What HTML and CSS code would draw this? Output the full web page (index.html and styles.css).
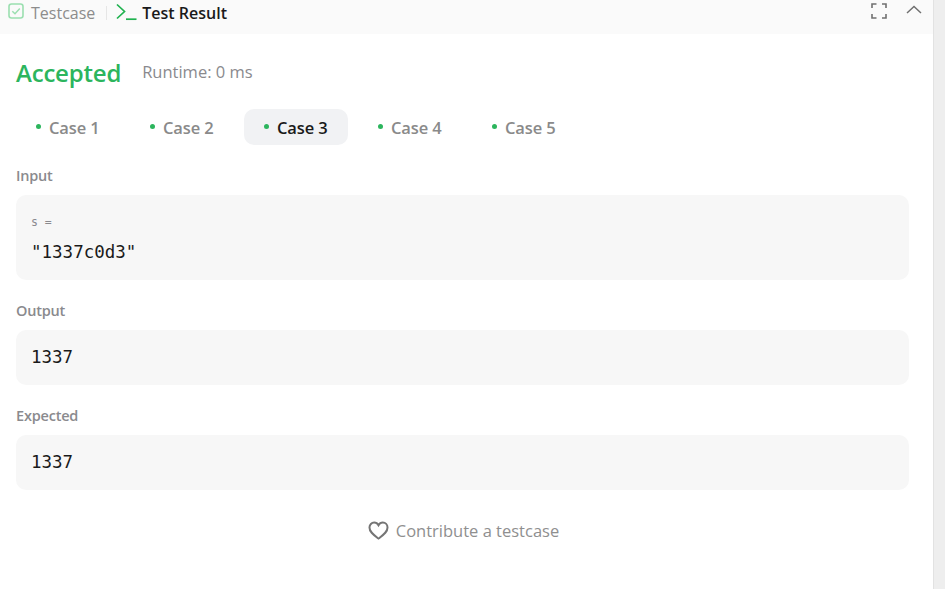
FILE: index.html
```html
<!DOCTYPE html>
<html lang="en">
<head>
    <meta charset="UTF-8">
    <meta name="viewport" content="width=device-width, initial-scale=1.0">
    <title>Test Result</title>
    <link rel="stylesheet" href="styles.css">
</head>
<body>

<div class="panel">
    <!-- Header tabs -->
    <div class="header">
        <div class="header-tab">
            <svg class="icon-check" width="16" height="16" viewBox="0 0 16 16" fill="none">
                <rect x="1" y="1" width="14" height="14" rx="2.5" stroke="#9bdfb0" stroke-width="1.6"/>
                <path d="M4.3 8.200l2.700 2.600 4.800-5.200" stroke="#9bdfb0" stroke-width="1.5"/>
            </svg>
            <span>Testcase</span>
        </div>
        <div class="divider"></div>
        <div class="header-tab active">
            <svg class="icon-term" width="21" height="18" viewBox="0 0 21 18" fill="none">
                <path d="M1 1.500l7.500 7-7.500 7" stroke="#1fb24f" stroke-width="1.700"/>
                <path d="M10 16.200h10.500" stroke="#1fb24f" stroke-width="1.700"/>
            </svg>
            <span>Test Result</span>
        </div>
        <div class="header-actions">
            <svg width="16" height="16" viewBox="0 0 16 16" fill="none">
                <path d="M1 5V1h4.500M11 1h4v4M15 11v4h-4M5.500 15H1v-4" stroke="#707070" stroke-width="1.600"/>
            </svg>
            <svg class="icon-chevron" width="16" height="9" viewBox="0 0 16 9" fill="none">
                <path d="M1 8l7-6.500L15 8" stroke="#707070" stroke-width="1.500"/>
            </svg>
        </div>
    </div>

    <!-- Result -->
    <div class="content">
        <div class="status">
            <span class="accepted">Accepted</span>
            <span class="runtime">Runtime: 0 ms</span>
        </div>

        <div class="cases">
            <div class="case"><i></i>Case 1</div>
            <div class="case"><i></i>Case 2</div>
            <div class="case active"><i></i>Case 3</div>
            <div class="case"><i></i>Case 4</div>
            <div class="case"><i></i>Case 5</div>
        </div>

        <div class="label first">Input</div>
        <div class="box">
            <div class="var-name">s =</div>
            <div class="value">"1337c0d3"</div>
        </div>

        <div class="label">Output</div>
        <div class="box"><div class="value">1337</div></div>

        <div class="label">Expected</div>
        <div class="box"><div class="value">1337</div></div>

        <div class="contribute">
            <svg width="21" height="19" viewBox="0 0 22 20" fill="none">
                <path d="M11 18.500C6 14.500 1.500 11.500 1.500 6.800 1.500 3.800 3.800 1.700 6.400 1.700c1.900 0 3.600 1 4.600 2.800 1-1.800 2.700-2.800 4.600-2.800 2.600 0 4.900 2.100 4.900 5.100 0 4.700-4.500 7.700-9.500 11.700z" stroke="#757575" stroke-width="2.100"/>
            </svg>
            <span>Contribute a testcase</span>
        </div>
    </div>
</div>

<div class="scrollbar"></div>

</body>
</html>
```
FILE: styles.css
```css
:root {
    --green: #2cb55d;
    --gray-text: #8a8a8e;
    --box-bg: #f7f7f7;
}

html, body {
    height: 100%;
}

body {
    font-family: "Open Sans", "Noto Sans", sans-serif;
    margin: 0;
    padding: 0;
    display: flex;
    height: 589px;
    overflow: hidden;
    background-color: #fff;
    color: #1a1a1a;
}

.panel {
    flex: 1;
    min-width: 0;
    display: flex;
    flex-direction: column;
}

.scrollbar {
    width: 11px;
    flex-shrink: 0;
    background-color: #eeeeee;
    border-left: 1px solid #e2e2e2;
}

.header {
    height: 34px;
    flex-shrink: 0;
    display: flex;
    align-items: flex-start;
    padding: 3px 11px 0 8px;
    background-color: #fafafa;
    box-sizing: border-box;
}

.header-tab {
    display: flex;
    align-items: center;
    gap: 7px;
    height: 20px;
    font-size: 16px;
    color: #8c8c8c;
}

.header-tab.active {
    color: #1a1a1a;
    font-weight: 600;
    gap: 5px;
    margin-left: 9px;
}

.icon-check {
    margin-bottom: 4px;
}

.icon-term {
    margin-bottom: 2px;
}

.divider {
    width: 1px;
    height: 14px;
    margin: 3px 0 0 11px;
    background-color: #e6e6e6;
}

.header-actions {
    margin-left: auto;
    display: flex;
    align-items: center;
    gap: 19px;
    height: 16px;
}

.icon-chevron {
    margin-bottom: 3px;
}

.content {
    flex: 1;
    padding: 0 24px 0 16px;
}

.status {
    display: flex;
    align-items: center;
    gap: 21px;
    margin-top: 21px;
    height: 35px;
}

.accepted {
    font-size: 24px;
    font-weight: 600;
    letter-spacing: -0.2px;
    color: var(--green);
}

.runtime {
    font-size: 16.500px;
    margin-bottom: 2px;
    color: var(--gray-text);
}

.cases {
    display: flex;
    gap: 10px;
    margin-top: 19px;
}

.case {
    width: 104px;
    height: 36px;
    box-sizing: border-box;
    padding-left: 20px;
    display: flex;
    align-items: center;
    border-radius: 10px;
    font-size: 16.500px;
    font-weight: 600;
    letter-spacing: -0.1px;
    color: #8a8a8a;
}

.case i {
    width: 5px;
    height: 5px;
    margin-right: 8px;
    margin-bottom: 2px;
    border-radius: 50%;
    background-color: var(--green);
}

.case.active {
    background-color: #f1f2f4;
    color: #1a1a1a;
}

.label {
    margin-top: 21px;
    height: 20px;
    line-height: 20px;
    font-size: 14.500px;
    font-weight: 600;
    letter-spacing: -0.2px;
    color: var(--gray-text);
}

.box {
    margin-top: 9px;
    padding: 15px;
    border-radius: 10px;
    background-color: var(--box-bg);
}

.var-name {
    font-family: "DejaVu Sans Mono", monospace;
    font-size: 11.500px;
    line-height: 24px;
    color: #8a8a8e;
    margin-bottom: 6px;
}

.value {
    font-family: "DejaVu Sans Mono", monospace;
    font-size: 17.500px;
    line-height: 25px;
    color: #1a1a1a;
}

.contribute {
    display: flex;
    justify-content: center;
    align-items: center;
    gap: 7px;
    margin-top: 29px;
    padding-left: 2px;
    height: 22px;
    font-size: 16.500px;
    color: #8f8f8f;
}
```
